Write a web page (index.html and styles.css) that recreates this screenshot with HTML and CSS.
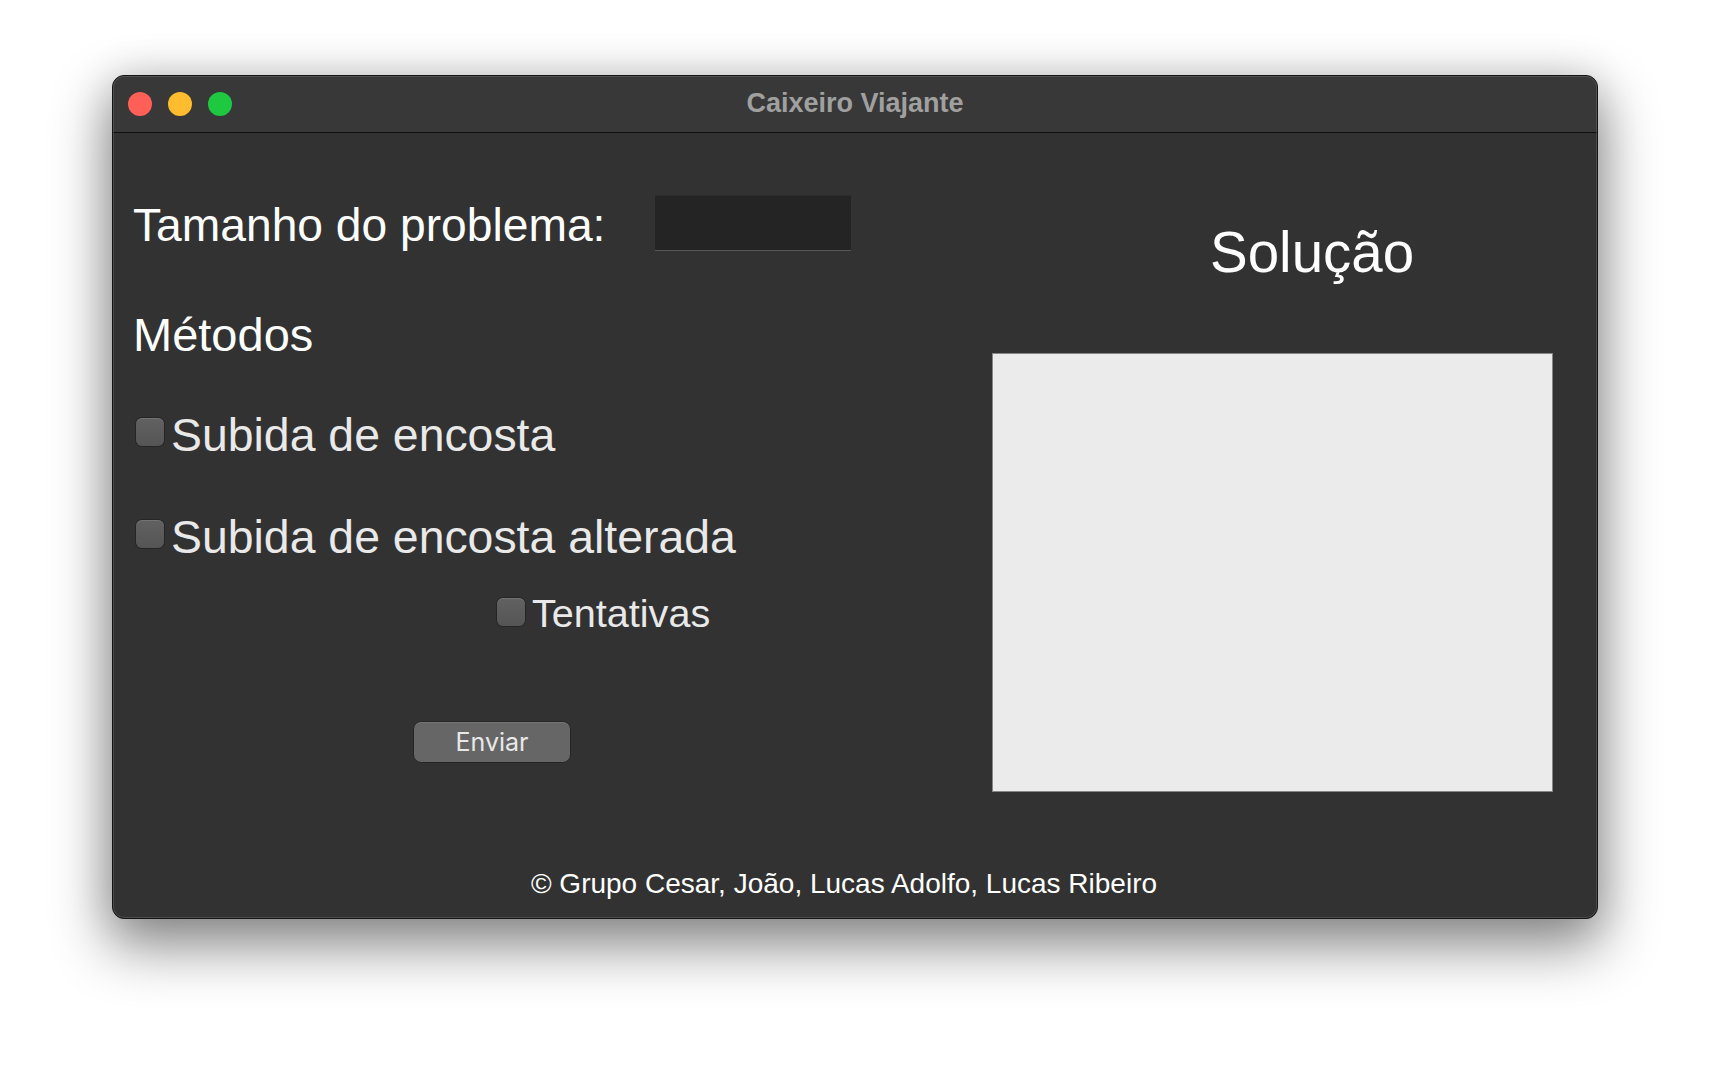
FILE: index.html
```html
<!DOCTYPE html>
<html lang="pt">
<head>
<meta charset="utf-8">
<title>Caixeiro Viajante</title>
<link rel="stylesheet" href="styles.css">
</head>
<body>
<div class="window">
  <div class="titlebar">
    <div class="lights">
      <span class="light red"></span>
      <span class="light yellow"></span>
      <span class="light green"></span>
    </div>
    <div class="title">Caixeiro Viajante</div>
    <div></div>
  </div>
  <div class="content">
    <div class="main">
      <div class="left">
        <div class="size-row">
          <label class="size-label">Tamanho do problema:</label>
          <div class="size-input"></div>
        </div>
        <h2 class="methods">Métodos</h2>
        <label class="check check-1"><input type="checkbox" class="box"><span>Subida de encosta</span></label>
        <label class="check check-2"><input type="checkbox" class="box"><span>Subida de encosta alterada</span></label>
        <label class="check check-3"><input type="checkbox" class="box"><span>Tentativas</span></label>
        <button class="send">Enviar</button>
      </div>
      <div class="right">
        <h1 class="solution-title">Solução</h1>
        <div class="solution-box"></div>
      </div>
    </div>
    <footer class="footer">© Grupo Cesar, João, Lucas Adolfo, Lucas Ribeiro</footer>
  </div>
</div>
</body>
</html>
```
FILE: styles.css
```css
html, body {
  margin: 0;
  background: #ffffff;
}
body {
  padding: 75px 0 0 112px;
  height: 1068px;
  box-sizing: border-box;
  overflow: hidden;
  font-family: "Liberation Sans", Arial, sans-serif;
}
.window {
  position: relative;
  width: 1486px;
  height: 844px;
  box-sizing: border-box;
  border: 1px solid #141414;
  border-radius: 12px;
  background: #323232;
  display: flex;
  flex-direction: column;
  overflow: hidden;
  box-shadow: 0 24px 56px 4px rgba(0, 0, 0, 0.45), 0 0 40px rgba(0, 0, 0, 0.12);
}
.window::after {
  content: "";
  position: absolute;
  inset: 0;
  border: 1px solid rgba(255, 255, 255, 0.13);
  border-radius: 11px;
  pointer-events: none;
}
.titlebar {
  height: 56px;
  flex: none;
  background: #383838;
  border-bottom: 1px solid #0f0f0f;
  display: grid;
  grid-template-columns: 1fr auto 1fr;
  align-items: center;
}
.lights {
  display: flex;
  gap: 16px;
  padding-left: 15px;
}
.light {
  width: 24px;
  height: 24px;
  border-radius: 50%;
}
.red { background: #fe5f57; }
.yellow { background: #febc2e; }
.green { background: #1ec840; }
.title {
  font-weight: bold;
  font-size: 27px;
  color: #a0a0a0;
  padding-bottom: 2px;
}
.content {
  flex: 1;
  display: flex;
  flex-direction: column;
}
.main {
  flex: 1;
  display: grid;
  grid-template-columns: 859px 561px;
  padding-left: 20px;
}
.left {
  display: flex;
  flex-direction: column;
  align-items: flex-start;
}
.size-row {
  margin-top: 62px;
  display: grid;
  grid-template-columns: 522px 196px;
  align-items: start;
}
.size-label {
  font-size: 46.2px;
  line-height: 56px;
  padding-top: 2px;
  color: #ffffff;
}
.size-input {
  height: 56px;
  box-sizing: border-box;
  background: #242424;
  border-top: 1px solid #2c2c2c;
  border-bottom: 1px solid #575757;
}
.methods {
  margin: 54px 0 0;
  font-size: 47px;
  line-height: 56px;
  font-weight: normal;
  color: #ffffff;
}
.check {
  display: flex;
  align-items: flex-start;
  gap: 7px;
  color: #e9e9e9;
  font-size: 46.4px;
  line-height: 56px;
}
.check-1 { margin: 44px 0 0 3px; }
.check-2 { margin: 46px 0 0 3px; }
.check-3 {
  margin: 24px 0 0 364px;
  font-size: 39.6px;
  line-height: 48px;
}
.box {
  appearance: none;
  -webkit-appearance: none;
  margin: 11px 0 0;
  width: 28px;
  height: 28px;
  flex: none;
  border-radius: 6px;
  background: linear-gradient(#616161, #555555);
  box-shadow: inset 0 1px 0 rgba(255, 255, 255, 0.12), 0 0 0 1px rgba(0, 0, 0, 0.25);
}
.check-3 .box { margin-top: 9px; }
.send {
  margin: 85px 0 0 281px;
  width: 156px;
  height: 40px;
  border: none;
  border-radius: 7px;
  background: #666666;
  box-shadow: inset 0 1px 0 rgba(255, 255, 255, 0.1), 0 0 0 0.5px rgba(0, 0, 0, 0.5);
  color: #e8e8e8;
  font-family: Inter, "Liberation Sans", sans-serif;
  font-size: 25px;
  padding: 0;
}
.right {
  display: flex;
  flex-direction: column;
  align-items: flex-start;
}
.solution-title {
  margin: 87px 0 0 218px;
  font-size: 56.5px;
  line-height: 66px;
  font-weight: normal;
  color: #ffffff;
}
.solution-box {
  margin-top: 67px;
  width: 561px;
  height: 439px;
  box-sizing: border-box;
  background: #ebebeb;
  border: 1px solid #858585;
}
.footer {
  padding: 0 22px 18px 0;
  text-align: center;
  font-size: 28px;
  line-height: 32px;
  color: #ffffff;
}
```
